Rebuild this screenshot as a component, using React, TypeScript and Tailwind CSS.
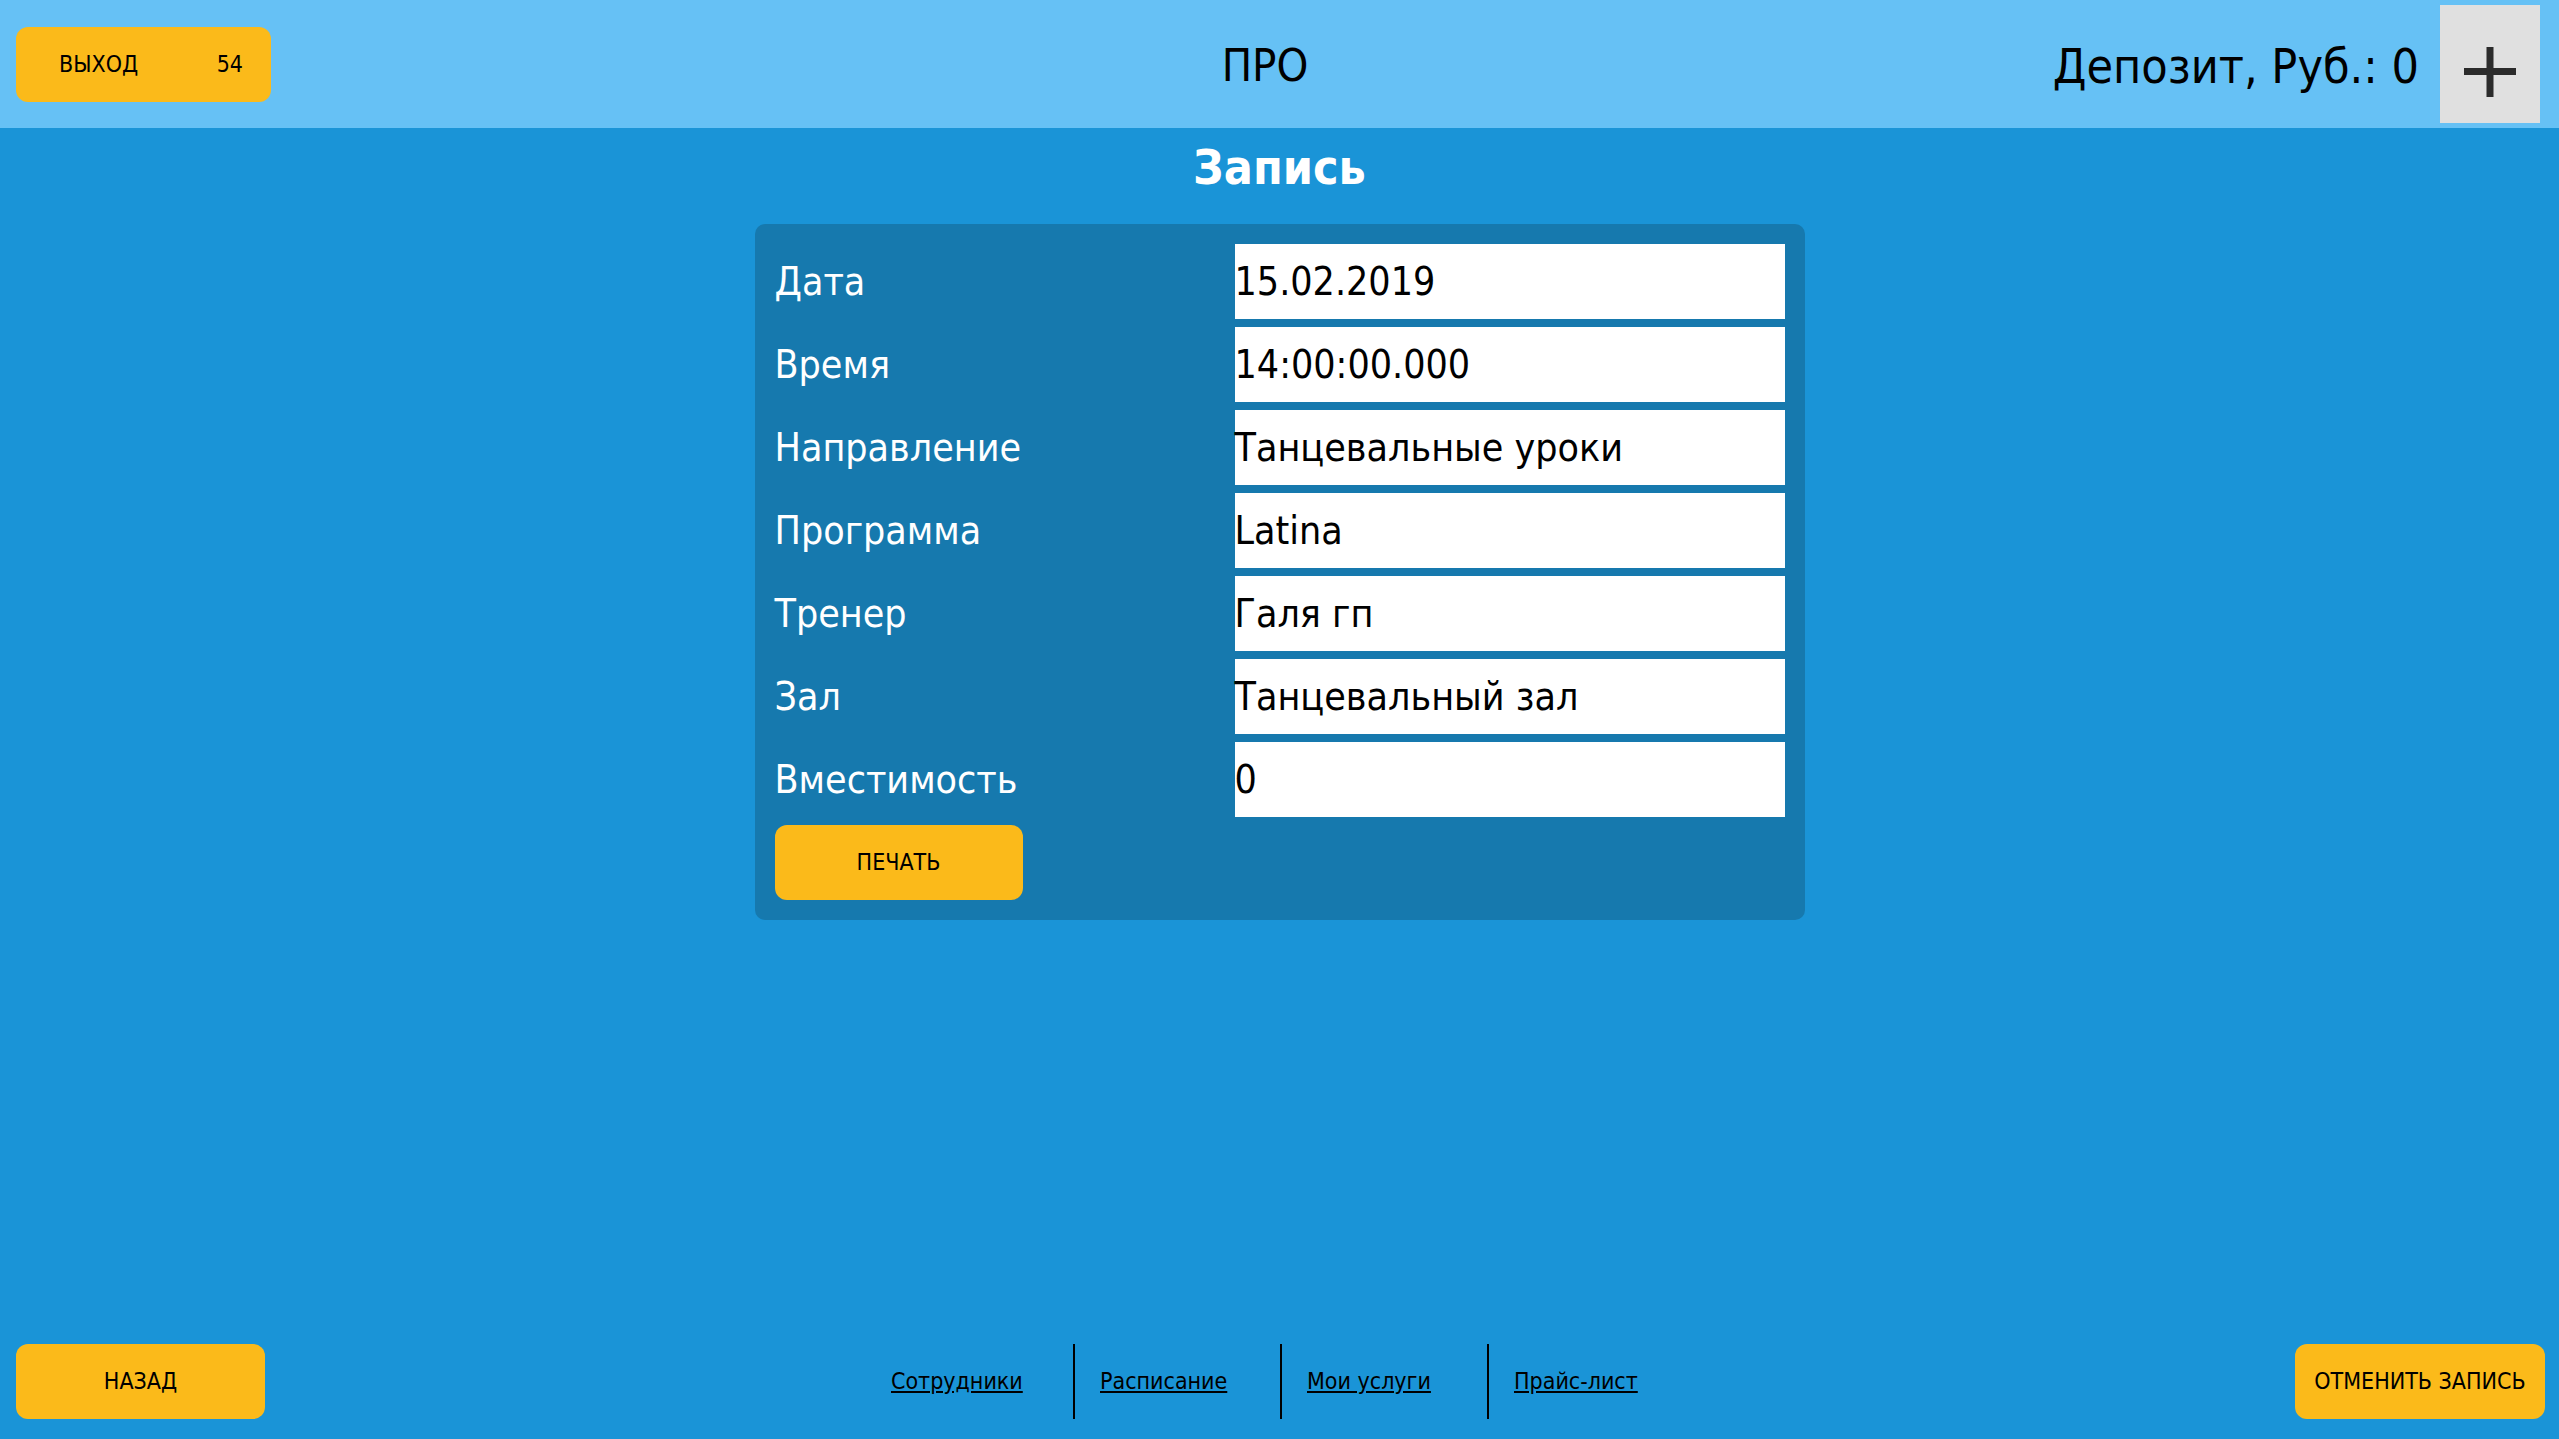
import React from 'react';

const rows: { label: string; value: string }[] = [
  { label: 'Дата', value: '15.02.2019' },
  { label: 'Время', value: '14:00:00.000' },
  { label: 'Направление', value: 'Танцевальные уроки' },
  { label: 'Программа', value: 'Latina' },
  { label: 'Тренер', value: 'Галя гп' },
  { label: 'Зал', value: 'Танцевальный зал' },
  { label: 'Вместимость', value: '0' },
];

const links = ['Сотрудники', 'Расписание', 'Мои услуги', 'Прайс-лист'];

function PlusIcon() {
  return (
    <svg width="52" height="50" viewBox="0 0 52 50">
      <rect x="0" y="21" width="52" height="7" fill="#2b2b2b" />
      <rect x="22.5" y="0" width="7" height="50" fill="#2b2b2b" />
    </svg>
  );
}

export default function App() {
  return (
    <div className="flex h-[1439px] flex-col bg-[#1A94D7] font-['DejaVu_Sans_Condensed','DejaVu_Sans',sans-serif] text-black">
      <header className="grid h-[128px] shrink-0 grid-cols-[1fr_auto_1fr] items-center bg-[#66C1F5] pl-4 pr-[19px]">
        <div>
          <button className="flex h-[75px] w-[255px] items-center rounded-xl bg-[#FBBA1A] pl-[43px] pr-[28px] text-[23px]">
            <span>ВЫХОД</span>
            <span className="ml-auto">54</span>
          </button>
        </div>
        <div className="mr-[26px] pt-[3px] text-[45px]">ПРО</div>
        <div className="flex items-center justify-end gap-[21px]">
          <span className="pt-[3px] text-[48px]">Депозит, Руб.: 0</span>
          <div className="flex h-[118px] w-[100px] items-center justify-center bg-[#E0E0E0] pt-[16px]">
            <PlusIcon />
          </div>
        </div>
      </header>

      <main className="flex flex-1 flex-col items-center">
        <h1 className="flex h-[96px] items-center pb-[18px] text-[48px] font-bold text-white">Запись</h1>
        <div className="w-[1050px] rounded-[10px] bg-[#1679AE] p-5">
          <div className="flex flex-col gap-2">
            {rows.map((r) => (
              <div key={r.label} className="flex h-[75px] items-center">
                <div className="w-[460px] pt-[2px] text-[39px] text-white">{r.label}</div>
                <div className="flex h-full w-[550px] items-center bg-white pt-[2px] text-[39px] text-black">{r.value}</div>
              </div>
            ))}
            <button className="h-[75px] w-[248px] rounded-xl bg-[#FBBA1A] text-[23px]">ПЕЧАТЬ</button>
          </div>
        </div>
      </main>

      <footer className="flex shrink-0 items-center justify-between pb-5 pl-4 pr-[14px]">
        <button className="h-[75px] w-[249px] rounded-xl bg-[#FBBA1A] text-[23px]">НАЗАД</button>
        <nav className="flex h-[75px]">
          {links.map((l, i) => (
            <div
              key={l}
              className={`flex w-[207px] items-center pl-[25px] ${i > 0 ? 'border-l-2 border-black' : ''}`}
            >
              <a href="#" className="text-[23px] text-black underline">{l}</a>
            </div>
          ))}
        </nav>
        <button className="h-[75px] w-[250px] rounded-xl bg-[#FBBA1A] text-[23px]">ОТМЕНИТЬ ЗАПИСЬ</button>
      </footer>
    </div>
  );
}
